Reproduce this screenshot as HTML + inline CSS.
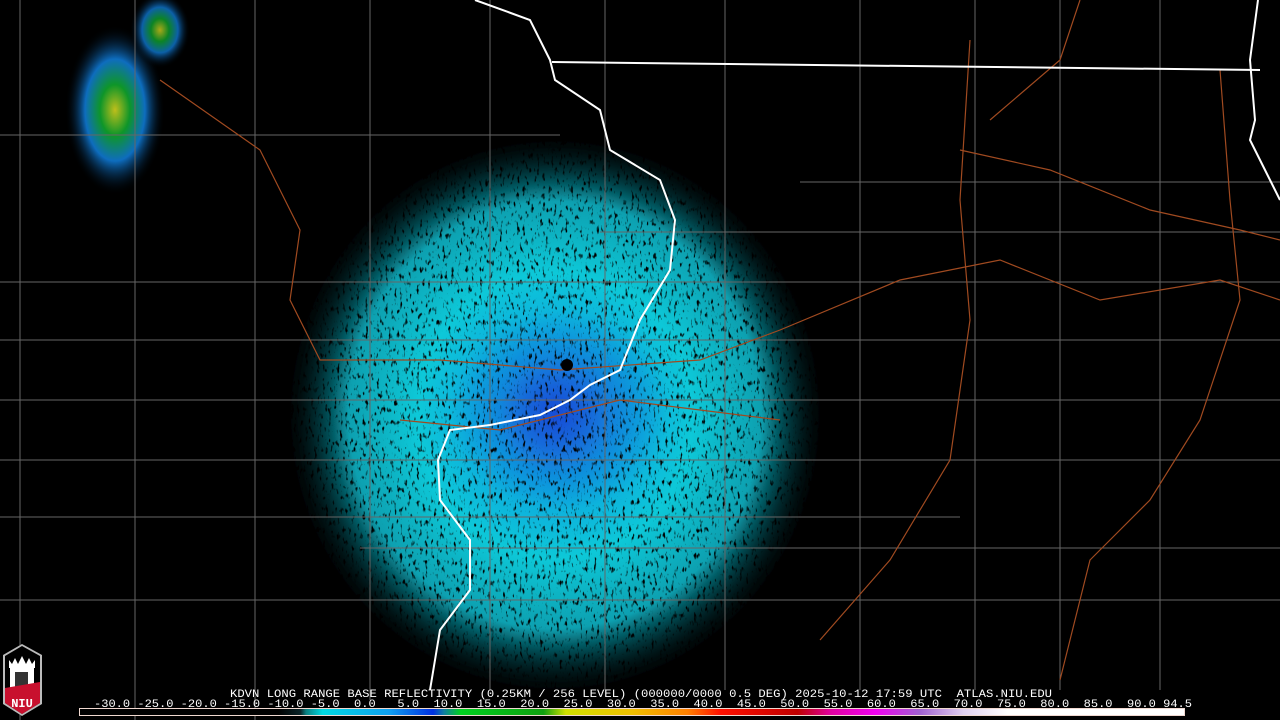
<!DOCTYPE html>
<html><head><meta charset="utf-8"><style>
html,body{margin:0;padding:0;background:#000;width:1280px;height:720px;overflow:hidden}
svg{display:block}
text{font-family:"Liberation Mono","DejaVu Sans Mono",monospace;fill:#fff;white-space:pre}
</style></head><body>
<svg width="1280" height="720" viewBox="0 0 1280 720">
<defs>
<radialGradient id="rb" cx="0.5" cy="0.5" r="0.5">
<stop offset="0" stop-color="#1a60e0"/>
<stop offset="0.2" stop-color="#10a0e0"/>
<stop offset="0.5" stop-color="#10c8d8"/>
<stop offset="0.75" stop-color="#0aa0b0"/>
<stop offset="1" stop-color="#000" stop-opacity="0"/>
</radialGradient>
<radialGradient id="rb2" cx="0.5" cy="0.5" r="0.5">
<stop offset="0" stop-color="#1540d0" stop-opacity="0.6"/>
<stop offset="1" stop-color="#1540d0" stop-opacity="0"/>
</radialGradient>
<radialGradient id="nw" cx="0.5" cy="0.5" r="0.5">
<stop offset="0" stop-color="#e0e020"/>
<stop offset="0.3" stop-color="#10b030"/>
<stop offset="0.6" stop-color="#1080e0"/>
<stop offset="1" stop-color="#000" stop-opacity="0"/>
</radialGradient>
<filter id="spk" x="0" y="0" width="1280" height="720" filterUnits="userSpaceOnUse">
<feTurbulence type="fractalNoise" baseFrequency="0.35 0.15" numOctaves="2" seed="3"/>
<feColorMatrix type="matrix" values="0 0 0 0 0  0 0 0 0 0  0 0 0 0 0  5 0 0 0 -2.9" result="n"/>
<feComposite in="SourceGraphic" in2="n" operator="out"/>
</filter>
<linearGradient id="cb" x1="0" x2="1">
<stop offset="0" stop-color="#000"/>
<stop offset="0.18" stop-color="#000"/>
<stop offset="0.2" stop-color="#0a2428"/>
<stop offset="0.205" stop-color="#0a8080"/>
<stop offset="0.22" stop-color="#00d8e0"/>
<stop offset="0.28" stop-color="#10a0f0"/>
<stop offset="0.32" stop-color="#0030e0"/>
<stop offset="0.33" stop-color="#1080a0"/>
<stop offset="0.345" stop-color="#00d020"/>
<stop offset="0.42" stop-color="#10a010"/>
<stop offset="0.44" stop-color="#d0e000"/>
<stop offset="0.5" stop-color="#f0c000"/>
<stop offset="0.55" stop-color="#ff8000"/>
<stop offset="0.58" stop-color="#ff1000"/>
<stop offset="0.65" stop-color="#c00000"/>
<stop offset="0.68" stop-color="#e000a0"/>
<stop offset="0.72" stop-color="#f000f0"/>
<stop offset="0.76" stop-color="#a060d0"/>
<stop offset="0.8" stop-color="#e0d0f0"/>
<stop offset="0.84" stop-color="#fff"/>
<stop offset="1" stop-color="#fff"/>
</linearGradient>
</defs>
<rect width="1280" height="720" fill="#000"/>
<g filter="url(#spk)">
<ellipse cx="555" cy="415" rx="275" ry="285" fill="url(#rb)"/>
<ellipse cx="560" cy="410" rx="110" ry="100" fill="url(#rb2)"/>
</g>
<ellipse cx="115" cy="110" rx="50" ry="85" fill="url(#nw)" opacity="0.85"/>
<ellipse cx="160" cy="30" rx="30" ry="38" fill="url(#nw)" opacity="0.75"/>
<g stroke="#666" stroke-width="1" fill="none">
<path d="M0 135 H560 M0 282 H1280 M0 400 H1280 M0 517 H960 M360 548 H1280 M0 340 H1280 M0 460 H1280 M0 600 H1280 M800 182 H1280 M600 232 H1280"/>
<path d="M20 0 V720 M135 0 V720 M255 0 V720 M370 0 V700 M490 0 V690 M605 0 V690 M725 0 V690 M860 0 V690 M975 0 V690 M1060 0 V690 M1160 0 V690"/>
</g>
<g stroke="#a04a20" stroke-width="1.2" fill="none">
<path d="M160 80 L260 150 L300 230 L290 300 L320 360 L440 360 L560 370 L700 360 L780 330 L900 280 L1000 260 L1100 300 L1220 280 L1280 300"/>
<path d="M960 150 L1050 170 L1150 210 L1240 230 L1280 240"/>
<path d="M970 40 L960 200 L970 320 L950 460 L890 560 L820 640"/>
<path d="M1080 0 L1060 60 L990 120"/>
<path d="M1220 70 L1230 200 L1240 300 L1200 420 L1150 500 L1090 560 L1060 680"/>
<path d="M400 420 L500 430 L620 400 L780 420"/>
</g>
<g stroke="#fff" stroke-width="2" fill="none">
<path d="M475 0 L530 20 L550 60 L555 80 L600 110 L610 150 L660 180 L675 220 L670 270 L640 320 L620 370 L590 385 L570 400 L540 415 L490 425 L450 430 L438 460 L440 500 L470 540 L470 590 L440 630 L430 690"/>
<path d="M552 62 L1260 70"/>
<path d="M1258 0 L1250 60 L1255 120 L1250 140 L1265 170 L1280 200"/>
</g>
<circle cx="567" cy="365" r="6" fill="#000"/>
<g>
<path d="M3 655 L22 644 L42 655 L42 704 L22 716 L3 704 Z" fill="#bbb"/>
<path d="M5 656 L22 646 L40 656 L40 703 L22 714 L5 703 Z" fill="#000"/>
<path d="M9 668 L9 660 L12 664 L15 658 L18 664 L22 656 L26 664 L29 658 L32 664 L35 660 L35 668 Z" fill="#fff"/>
<rect x="10" y="668" width="24" height="22" fill="#fff"/>
<rect x="15" y="672" width="13" height="16" fill="#333"/>
<path d="M5 688 L40 682 V703 L22 714 L5 703 Z" fill="#c8102e"/>
<text x="22" y="707" font-family="Liberation Sans" font-size="12" font-weight="bold" text-anchor="middle">NIU</text>
</g>
<text x="230" y="697" font-size="11" textLength="822" lengthAdjust="spacingAndGlyphs">KDVN LONG RANGE BASE REFLECTIVITY (0.25KM / 256 LEVEL) (000000/0000 0.5 DEG) 2025-10-12 17:59 UTC  ATLAS.NIU.EDU</text>
<text x="94" y="707" font-size="11" textLength="1098" lengthAdjust="spacingAndGlyphs">-30.0 -25.0 -20.0 -15.0 -10.0 -5.0  0.0   5.0  10.0  15.0  20.0  25.0  30.0  35.0  40.0  45.0  50.0  55.0  60.0  65.0  70.0  75.0  80.0  85.0  90.0 94.5</text>
<rect x="79.5" y="708.5" width="1105" height="7" fill="url(#cb)" stroke="#f0d8d0" stroke-width="1"/>
</svg>
</body></html>
